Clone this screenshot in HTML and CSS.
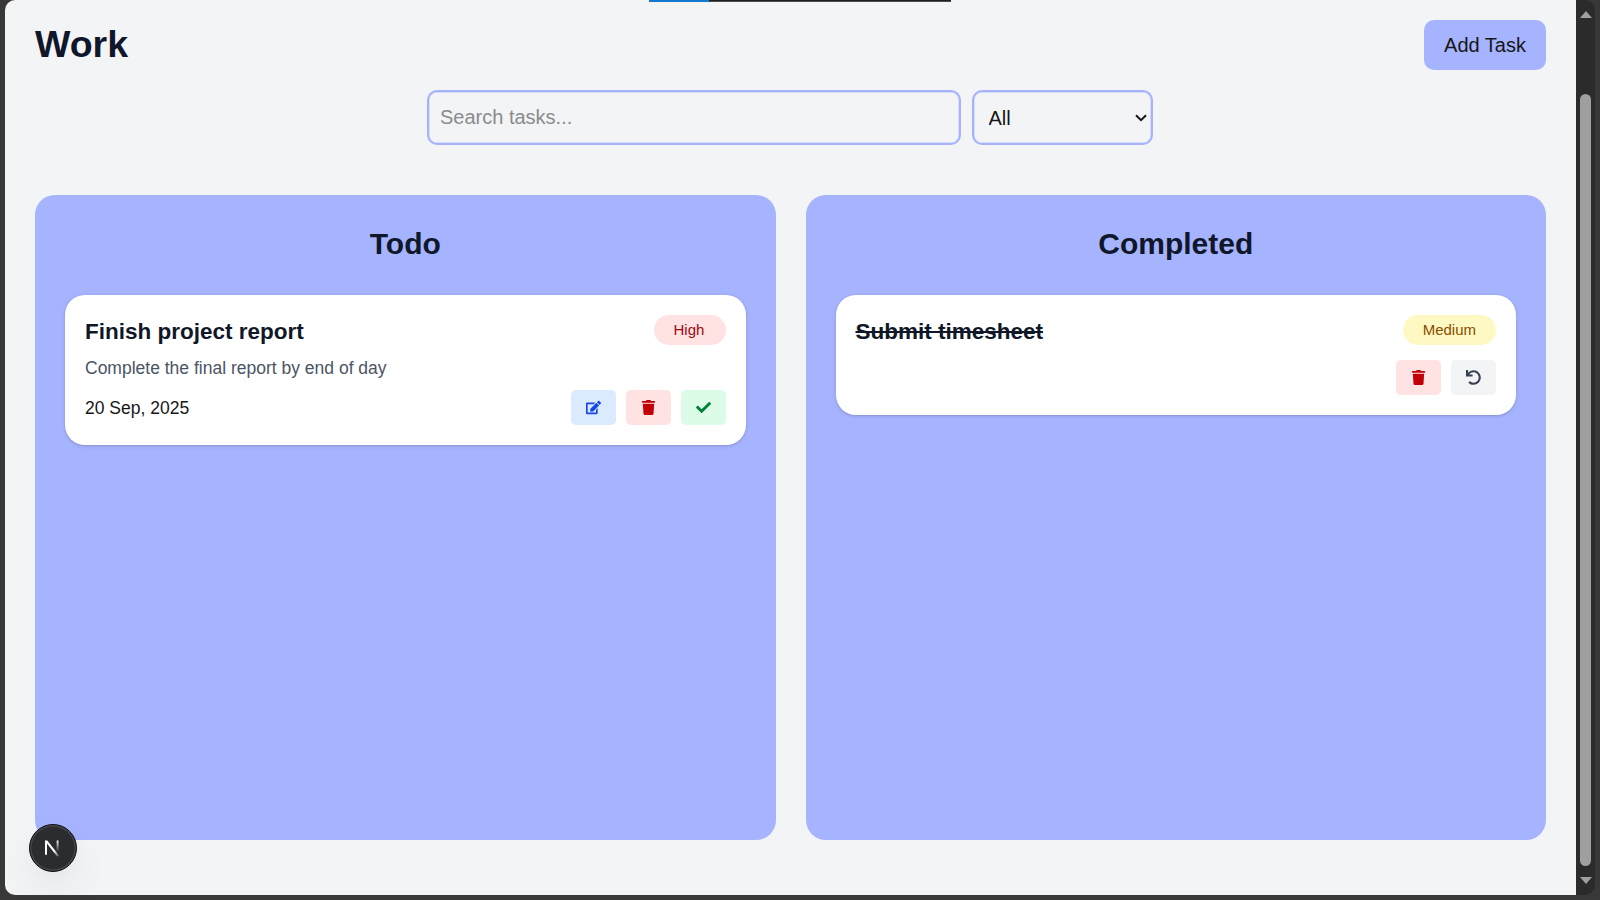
FILE: index.html
```html
<!DOCTYPE html>
<html lang="en">
<head>
<meta charset="utf-8">
<title>Work</title>
<link rel="stylesheet" href="styles.css">
</head>
<body>
<svg width="0" height="0" class="defs" aria-hidden="true">
  <symbol id="trash" viewBox="0 0 448 512"><path d="M432 32H312l-9.4-18.7A24 24 0 0 0 281.1 0H166.8a23.72 23.72 0 0 0-21.4 13.3L136 32H16A16 16 0 0 0 0 48v32a16 16 0 0 0 16 16h416a16 16 0 0 0 16-16V48a16 16 0 0 0-16-16zM53.2 467a48 48 0 0 0 47.9 45h245.8a48 48 0 0 0 47.9-45L416 128H32z"/></symbol>
</svg>
<div class="window">
  <main class="page">
    <header class="header">
      <h1 class="title">Work</h1>
      <button class="add">Add Task</button>
    </header>
    <div class="filters">
      <input class="search" type="text" placeholder="Search tasks...">
      <div class="select-wrap">
        <select class="select"><option>All</option><option>Todo</option><option>Completed</option></select>
        <svg class="chevron" viewBox="0 0 12 8"><path d="M1 1.2l5 5 5-5" fill="none" stroke="#171717" stroke-width="2"/></svg>
      </div>
    </div>
    <div class="board">
      <section class="column">
        <h2 class="column-title">Todo</h2>
        <article class="card">
          <div class="row top">
            <h3 class="task">Finish project report</h3>
            <span class="badge high">High</span>
          </div>
          <p class="desc">Complete the final report by end of day</p>
          <div class="row foot">
            <span class="date">20 Sep, 2025</span>
            <div class="actions">
              <button class="btn edit" aria-label="Edit"><svg class="icon" viewBox="0 0 576 512"><path d="M402.6 83.2l90.2 90.2c3.8 3.8 3.8 10 0 13.8L274.4 405.6l-92.8 10.3c-12.4 1.4-22.9-9.1-21.5-21.5l10.3-92.8L388.8 83.2c3.8-3.8 10-3.8 13.8 0zm162-22.9l-48.8-48.8c-15.2-15.2-39.9-15.2-55.2 0l-35.4 35.4c-3.8 3.8-3.8 10 0 13.8l90.2 90.2c3.8 3.8 10 3.8 13.8 0l35.4-35.4c15.2-15.3 15.2-40 0-55.2zM384 346.2V448H64V128h229.8c3.2 0 6.2-1.3 8.5-3.5l40-40c7.6-7.6 2.2-20.5-8.5-20.5H48C21.5 64 0 85.5 0 112v352c0 26.5 21.5 48 48 48h352c26.5 0 48-21.5 48-48V306.2c0-10.7-12.9-16-20.5-8.5l-40 40c-2.2 2.3-3.5 5.3-3.5 8.5z"/></svg></button>
              <button class="btn delete" aria-label="Delete"><svg class="icon"><use href="#trash"/></svg></button>
              <button class="btn done" aria-label="Complete"><svg class="icon" viewBox="0 0 512 512"><path d="M173.898 439.404l-166.4-166.4c-9.997-9.997-9.997-26.206 0-36.204l36.203-36.204c9.997-9.998 26.207-9.998 36.204 0L192 312.69 432.095 72.596c9.997-9.997 26.207-9.997 36.204 0l36.203 36.204c9.997 9.997 9.997 26.206 0 36.204l-294.4 294.401c-9.998 9.997-26.207 9.997-36.204-.001z"/></svg></button>
            </div>
          </div>
        </article>
      </section>
      <section class="column">
        <h2 class="column-title">Completed</h2>
        <article class="card">
          <div class="row top">
            <h3 class="task struck">Submit timesheet</h3>
            <span class="badge medium">Medium</span>
          </div>
          <div class="row foot end">
            <div class="actions">
              <button class="btn delete" aria-label="Delete"><svg class="icon"><use href="#trash"/></svg></button>
              <button class="btn undo" aria-label="Undo"><svg class="icon" viewBox="0 0 512 512"><path d="M212.333 224.333H12c-6.627 0-12-5.373-12-12V12C0 5.373 5.373 0 12 0h48c6.627 0 12 5.373 12 12v78.112C117.773 39.279 184.26 7.47 258.175 8.007c136.906.994 246.448 111.623 246.157 248.532C504.041 393.258 393.12 504 256.333 504c-64.089 0-122.496-24.313-166.51-64.215-5.099-4.622-5.334-12.554-.467-17.42l33.967-33.967c4.474-4.474 11.662-4.717 16.401-.525C170.76 415.336 211.58 432 256.333 432c97.268 0 176-78.716 176-176 0-97.267-78.716-176-176-176-58.496 0-110.28 28.476-142.274 72.333h98.274c6.627 0 12 5.373 12 12v48c0 6.627-5.373 12-12 12z"/></svg></button>
            </div>
          </div>
        </article>
      </section>
    </div>
  </main>
  <div class="scrollbar">
    <span class="arrow up"></span>
    <span class="thumb"></span>
    <span class="arrow down"></span>
  </div>
</div>
<div class="progress"><span class="progress-fill"></span></div>
<div class="dev-badge">
  <svg class="dev-logo" viewBox="0 0 16 18" fill="none">
    <defs>
      <linearGradient id="diag" x1="8" y1="9" x2="14.5" y2="17" gradientUnits="userSpaceOnUse"><stop offset=".35" stop-color="#fff"/><stop offset="1" stop-color="#fff" stop-opacity=".2"/></linearGradient>
      <linearGradient id="stem" x1="14" y1="1" x2="14" y2="13" gradientUnits="userSpaceOnUse"><stop stop-color="#fff"/><stop offset="1" stop-color="#fff" stop-opacity="0"/></linearGradient>
    </defs>
    <path d="M1 1.5h2.3L15 16.4l-1.7 1.3L3 4.6v11.2H1z" fill="url(#diag)"/>
    <path d="M13.6 1.5v11" stroke="url(#stem)" stroke-width="1.9"/>
  </svg>
</div>
</body>
</html>
```
FILE: styles.css
```css
* { box-sizing: border-box; margin: 0; padding: 0; }
body {
  width: 1600px;
  height: 900px;
  padding: 0 5px 5px;
  overflow: hidden;
  background: #383838;
  color: #171717;
  font-family: "Liberation Sans", Arial, sans-serif;
}
button, input, select { font-family: inherit; border: 0; color: inherit; }
.defs { position: absolute; }
.window {
  display: flex;
  height: 895px;
  border-radius: 10px;
  overflow: hidden;
  background: #2b2b2b;
}
.page {
  flex: 1;
  padding: 20px 30px 0;
  background: #f3f4f6;
}
.header { display: flex; justify-content: space-between; align-items: flex-start; height: 50px; }
.title { font-size: 37.5px; line-height: 48px; color: #0f172b; }
.add {
  width: 122px;
  height: 50px;
  border-radius: 10px;
  background: #a6b3fe;
  font-size: 20px;
}
.filters { display: flex; justify-content: center; gap: 10.5px; margin: 20px 1.5px 50px 0; }
.search, .select {
  height: 55px;
  border: 2px solid #a6b3fa;
  border-radius: 10px;
  box-shadow: inset 0 0 0 .5px #bcc6fb;
  background: transparent;
  font-size: 20px;
}
.search { width: 534px; padding: 0 11px; }
.search::placeholder { color: #8a8b8c; }
.select-wrap { position: relative; }
.select { width: 181px; padding: 0 15px; appearance: none; }
.chevron { position: absolute; right: 6px; top: 24px; width: 12px; height: 8px; }
.board { display: grid; grid-template-columns: 1fr 1fr; gap: 30px; height: 645px; }
.column { padding: 30px; border-radius: 20px; background: #a6b3fe; }
.column-title { margin-bottom: 32px; font-size: 30px; line-height: 38px; text-align: center; color: #0f172b; }
.card {
  padding: 20px;
  border-radius: 20px;
  background: #fff;
  box-shadow: 0 1px 4px rgba(0, 0, 0, .1), 0 1px 2px rgba(0, 0, 0, .1);
}
.row { display: flex; justify-content: space-between; align-items: center; }
.top { height: 35px; align-items: flex-start; }
.task { font-size: 22.5px; line-height: 33px; color: #101828; }
.struck { text-decoration: line-through; }
.badge { padding: 0 20px; border-radius: 15px; font-size: 15px; line-height: 30px; }
.high { width: 72px; background: #ffe2e2; color: #9f0712; }
.medium { background: #fef9c2; color: #894b00; }
.desc { margin: 5px 0 8px; font-size: 17.5px; line-height: 27px; color: #4a5565; }
.foot { height: 35px; }
.end { justify-content: flex-end; margin-top: 10px; }
.date { padding-top: 1px; font-size: 17.5px; line-height: 25px; }
.actions { display: flex; gap: 10px; }
.btn { display: flex; align-items: center; justify-content: center; width: 45px; height: 35px; border-radius: 5px; }
.icon { width: 15px; height: 15px; fill: currentColor; }
.edit { background: #dbeafe; color: #1447e6; }
.delete { background: #ffe2e2; color: #c10007; }
.done { background: #dcfce7; color: #008236; }
.undo { background: #f3f4f6; color: #364153; }
.scrollbar { display: flex; flex-direction: column; align-items: center; width: 19px; padding: 11px 0; }
.arrow { border: 6.5px solid transparent; }
.up { border-top: 0; border-bottom: 7px solid #a0a0a0; }
.down { border-bottom: 0; border-top: 7px solid #a0a0a0; }
.thumb { width: 11px; height: 772px; margin: 76px 0 11px; border-radius: 6px; background: #9f9f9f; }
.progress { position: absolute; left: 649px; top: 0; width: 302px; height: 2px; background: linear-gradient(#1f1f1f 50%, #4b4b4c 50%); }
.progress-fill { display: block; width: 60px; height: 2px; background: #1379cf; }
.dev-badge {
  position: absolute;
  left: 28.5px;
  top: 823.5px;
  display: flex;
  align-items: center;
  justify-content: center;
  width: 48px;
  height: 48px;
  border: 1px solid #111214;
  border-radius: 50%;
  background: #2b2c2f;
  box-shadow: inset 0 0 0 1.5px #45474a, 0 20px 40px rgba(0, 0, 0, .06), 0 5px 15px rgba(0, 0, 0, .02);
}
.dev-logo { width: 16px; height: 18px; margin-right: 1px; }
```
